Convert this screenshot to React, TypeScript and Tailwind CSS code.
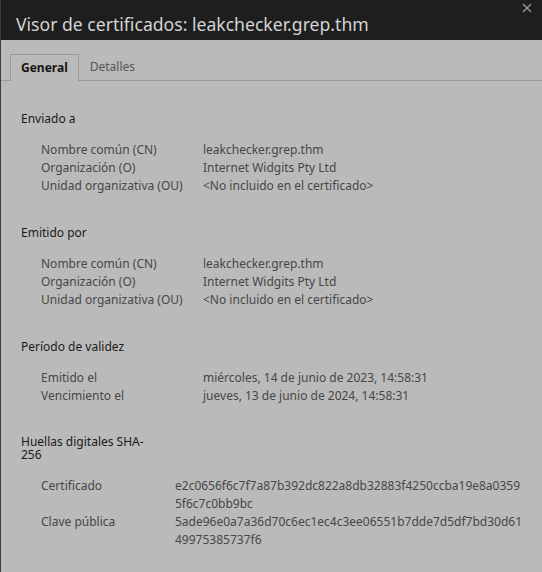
import React from "react";

type Row = { label: string; value: React.ReactNode };

const sections: { title: React.ReactNode; rows: Row[]; valueCol: string; rowsTop: string }[] = [
  {
    title: "Enviado a",
    valueCol: "grid-cols-[162px_1fr]",
    rowsTop: "mt-[13px]",
    rows: [
      { label: "Nombre común (CN)", value: "leakchecker.grep.thm" },
      { label: "Organización (O)", value: "Internet Widgits Pty Ltd" },
      { label: "Unidad organizativa (OU)", value: "<No incluido en el certificado>" },
    ],
  },
  {
    title: "Emitido por",
    valueCol: "grid-cols-[162px_1fr]",
    rowsTop: "mt-[13px]",
    rows: [
      { label: "Nombre común (CN)", value: "leakchecker.grep.thm" },
      { label: "Organización (O)", value: "Internet Widgits Pty Ltd" },
      { label: "Unidad organizativa (OU)", value: "<No incluido en el certificado>" },
    ],
  },
  {
    title: "Período de validez",
    valueCol: "grid-cols-[162px_1fr]",
    rowsTop: "mt-[13px]",
    rows: [
      { label: "Emitido el", value: "miércoles, 14 de junio de 2023, 14:58:31" },
      { label: "Vencimiento el", value: "jueves, 13 de junio de 2024, 14:58:31" },
    ],
  },
  {
    title: (
      <span className="block w-[125px] leading-[13px] pt-[1px]">Huellas digitales SHA-256</span>
    ),
    valueCol: "grid-cols-[134px_1fr]",
    rowsTop: "mt-[16px]",
    rows: [
      {
        label: "Certificado",
        value: (
          <>
            <span className="block">e2c0656f6c7f7a87b392dc822a8db32883f4250ccba19e8a0359</span>
            <span className="block">5f6c7c0bb9bc</span>
          </>
        ),
      },
      {
        label: "Clave pública",
        value: (
          <>
            <span className="block">5ade96e0a7a36d70c6ec1ec4c3ee06551b7dde7d5df7bd30d61</span>
            <span className="block">49975385737f6</span>
          </>
        ),
      },
    ],
  },
];

export default function App() {
  return (
    <div
      className="w-[542px] h-[572px] overflow-hidden bg-[#bababa] border-l border-[#3c3c3c] flex flex-col"
      style={{ fontFamily: '"Noto Sans", "Open Sans", sans-serif' }}
    >
      {/* title bar */}
      <div className="relative h-[40px] shrink-0 bg-[#1e1e1e] flex items-center pl-[15px]">
        <span className="text-[17.6px] text-[#d4d4d4] leading-none mt-[9px]">
          Visor de certificados: leakchecker.grep.thm
        </span>
        <svg className="absolute right-[10px] top-[3px]" width="10" height="10" viewBox="0 0 10 10">
          <path d="M1 1L9 9M9 1L1 9" stroke="#8c8c8c" strokeWidth="1.6" />
        </svg>
      </div>

      {/* tabs */}
      <div className="h-[41px] shrink-0 flex items-end border-b border-[#9a9a9a] pl-[9px]">
        <div className="relative top-[1px] h-[27px] px-[10px] flex items-center border border-b-0 border-[#9a9a9a] bg-[#bababa] text-[12px] font-bold text-[#141414]">
          General
        </div>
        <div className="h-[27px] px-[11px] flex items-center text-[12px] text-[#555]">Detalles</div>
      </div>

      {/* content */}
      <div className="pl-[20px] pr-[10px] pt-[29px] flex flex-col gap-[29px]">
        {sections.map((s, i) => (
          <div key={i}>
            <div className="text-[12px] text-[#1a1a1a] leading-[18px]">{s.title}</div>
            <div className={`${s.rowsTop} pl-[20px] grid ${s.valueCol} text-[12px] leading-[18px] text-[#474747]`}>
              {s.rows.map((r, j) => (
                <React.Fragment key={j}>
                  <div>{r.label}</div>
                  <div>{r.value}</div>
                </React.Fragment>
              ))}
            </div>
          </div>
        ))}
      </div>
    </div>
  );
}
